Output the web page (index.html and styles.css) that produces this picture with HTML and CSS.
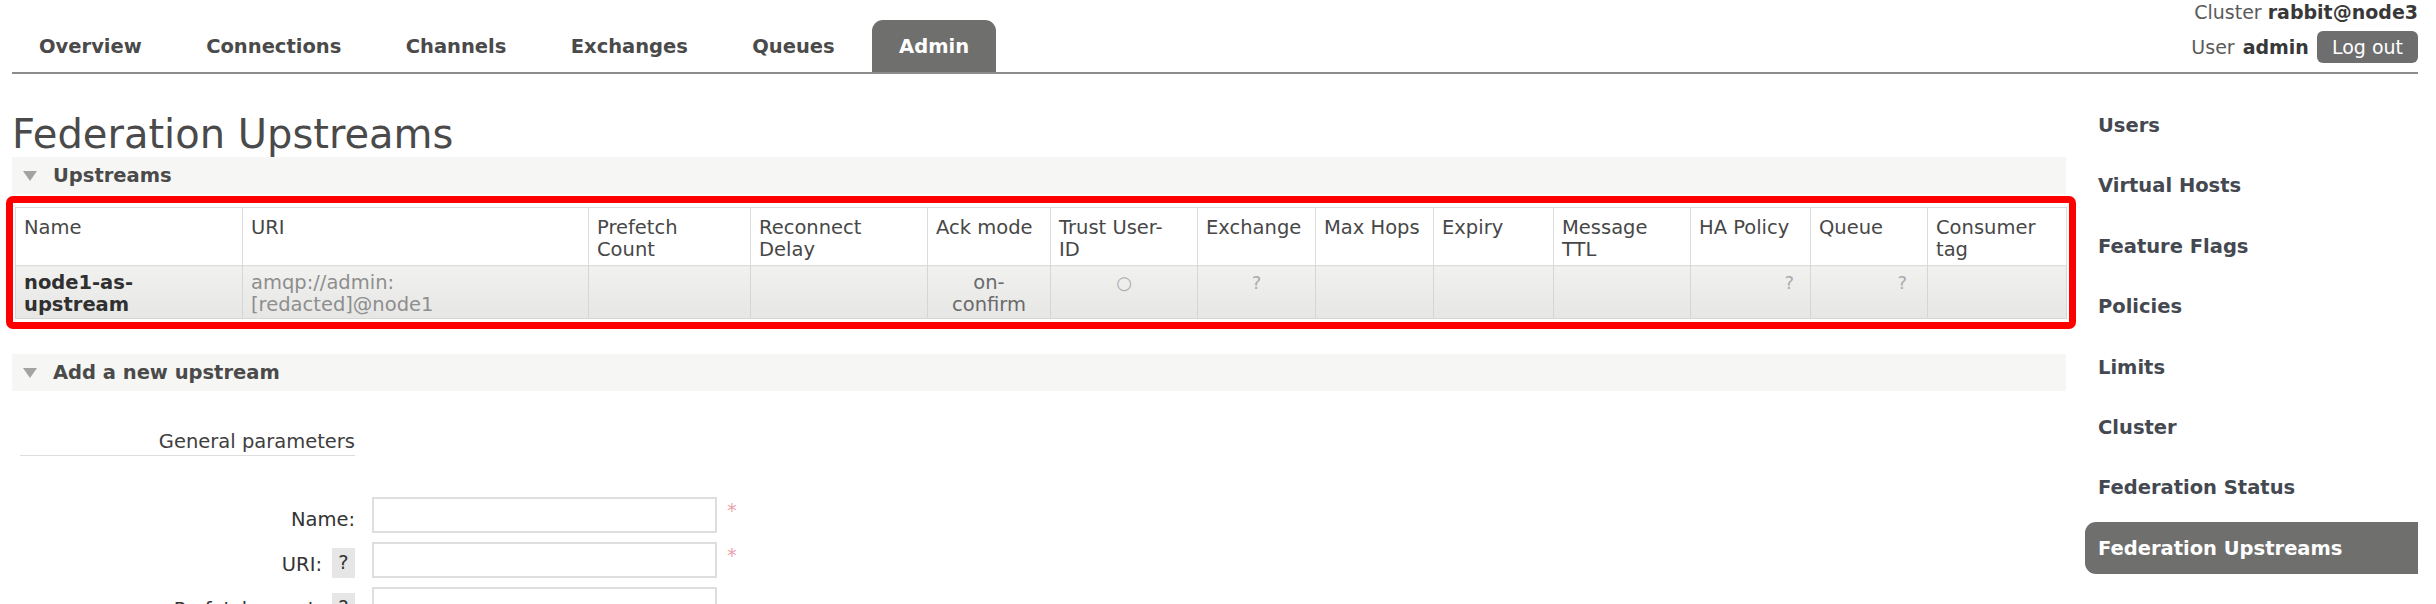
FILE: index.html
```html
<!DOCTYPE html>
<html>
<head>
<meta charset="utf-8">
<title>RabbitMQ Management - Federation Upstreams</title>
<link rel="stylesheet" href="styles.css">
</head>
<body>
<div class="viewport">
  <header class="top">
    <ul class="tabs">
      <li class="tab"><a>Overview</a></li>
      <li class="tab"><a>Connections</a></li>
      <li class="tab"><a>Channels</a></li>
      <li class="tab"><a>Exchanges</a></li>
      <li class="tab"><a>Queues</a></li>
      <li class="tab active"><a>Admin</a></li>
    </ul>
    <div class="login">
      <div class="cluster">Cluster <b>rabbit@node3</b></div>
      <div class="user">User <b>admin</b><span class="logout">Log out</span></div>
    </div>
  </header>

  <div class="page">
    <main class="main">
      <h1 class="title">Federation Upstreams</h1>

      <section class="section">
        <h2 class="section-head"><span class="tri"></span>Upstreams</h2>
        <div class="hl-wrap">
          <table class="list">
            <colgroup>
              <col class="c-name"><col class="c-uri"><col class="c-prefetch"><col class="c-reconnect"><col class="c-ack"><col class="c-trust"><col class="c-exchange"><col class="c-hops"><col class="c-expiry"><col class="c-ttl"><col class="c-ha"><col class="c-queue"><col class="c-tag">
            </colgroup>
            <thead>
              <tr>
                <th>Name</th>
                <th>URI</th>
                <th>Prefetch<br>Count</th>
                <th>Reconnect<br>Delay</th>
                <th>Ack mode</th>
                <th>Trust User-<br>ID</th>
                <th>Exchange</th>
                <th>Max Hops</th>
                <th>Expiry</th>
                <th>Message<br>TTL</th>
                <th>HA Policy</th>
                <th>Queue</th>
                <th>Consumer<br>tag</th>
              </tr>
            </thead>
            <tbody>
              <tr>
                <td class="strong">node1-as-<br>upstream</td>
                <td class="muted">amqp://admin:<br>[redacted]@node1</td>
                <td></td>
                <td></td>
                <td class="centre">on-<br>confirm</td>
                <td class="centre faint">○</td>
                <td class="centre faint">?</td>
                <td></td>
                <td></td>
                <td></td>
                <td class="right faint">?</td>
                <td class="right faint pad-q">?</td>
                <td></td>
              </tr>
            </tbody>
          </table>
          <div class="hl"></div>
        </div>
      </section>

      <section class="section second">
        <h2 class="section-head"><span class="tri"></span>Add a new upstream</h2>
        <div class="form">
          <div class="form-group">General parameters</div>
          <div class="form-row">
            <label class="form-label">Name:</label>
            <span class="input"></span>
            <span class="req">*</span>
          </div>
          <div class="form-row">
            <label class="form-label">URI:<span class="help">?</span></label>
            <span class="input"></span>
            <span class="req">*</span>
          </div>
          <div class="form-row">
            <label class="form-label">Prefetch count:<span class="help">?</span></label>
            <span class="input"></span>
            <span class="req"></span>
          </div>
        </div>
      </section>
    </main>

    <nav class="sidebar">
      <ul class="side-list">
        <li class="side-item"><a>Users</a></li>
        <li class="side-item"><a>Virtual Hosts</a></li>
        <li class="side-item"><a>Feature Flags</a></li>
        <li class="side-item"><a>Policies</a></li>
        <li class="side-item"><a>Limits</a></li>
        <li class="side-item"><a>Cluster</a></li>
        <li class="side-item"><a>Federation Status</a></li>
        <li class="side-item active"><a>Federation Upstreams</a></li>
      </ul>
    </nav>
  </div>
</div>
</body>
</html>
```

FILE: styles.css
```css
* { box-sizing: border-box; }

html, body {
  margin: 0;
  padding: 0;
  background: #ffffff;
}

body {
  font-family: "DejaVu Sans", Verdana, sans-serif;
  font-size: 19.5px;
  color: #484848;
}

.viewport {
  height: 604px;
  overflow: hidden;
}

/* ---------- top bar ---------- */
.top {
  display: flex;
  justify-content: space-between;
  align-items: flex-end;
  height: 74px;
  margin: 0 18px 0 12px;
  border-bottom: 2px solid #8c8c8c;
}

.tabs {
  display: flex;
  gap: 10.4px;
  list-style: none;
  margin: 0;
  padding: 0;
}

.tab a {
  display: block;
  height: 52px;
  line-height: 53px;
  padding: 0 27px;
  font-weight: bold;
  color: #4a4a4a;
  border-radius: 11px 11px 0 0;
}

.tab.active a {
  background: #6f706e;
  color: #ffffff;
}

.login {
  display: flex;
  flex-direction: column;
  align-items: flex-end;
  gap: 8px;
  padding-bottom: 9px;
  font-size: 19px;
  color: #5a5a5a;
}

.cluster, .user {
  line-height: 22px;
}

.cluster {
  margin-top: -1px;
}

.login b {
  color: #383838;
}

.user {
  display: flex;
  align-items: center;
  gap: 8px;
}

.logout {
  display: inline-block;
  height: 32px;
  line-height: 32px;
  padding: 0 15px;
  background: #6e6e6e;
  color: #ffffff;
  border-radius: 6px;
}

/* ---------- page ---------- */
.page {
  display: flex;
  gap: 19px;
  padding: 0 18px 0 12px;
}

.main {
  flex: 1;
  min-width: 0;
}

.title {
  margin: 38px 0 0 0;
  font-size: 40px;
  line-height: 45px;
  font-weight: normal;
  color: #4a4a4a;
}

.section-head {
  display: flex;
  align-items: center;
  height: 37px;
  margin: 0;
  padding-left: 11px;
  background: #f6f6f4;
  font-size: 19.5px;
  font-weight: bold;
  color: #4a4a4a;
}

.tri {
  width: 0;
  height: 0;
  margin-right: 16px;
  border-left: 7px solid transparent;
  border-right: 7px solid transparent;
  border-top: 10px solid #a3a3a3;
}

.second {
  margin-top: 35px;
}

/* ---------- list table ---------- */
.hl-wrap {
  position: relative;
  margin: 13px 0 0 3px;
}

.list {
  width: 2051px;
  table-layout: fixed;
  border-collapse: collapse;
  border: 1px solid #dcdcdc;
  font-size: 19.5px;
}

.c-name { width: 227px; }
.c-uri { width: 346px; }
.c-prefetch { width: 162px; }
.c-reconnect { width: 177px; }
.c-ack { width: 123px; }
.c-trust { width: 147px; }
.c-exchange { width: 118px; }
.c-hops { width: 118px; }
.c-expiry { width: 120px; }
.c-ttl { width: 137px; }
.c-ha { width: 120px; }
.c-queue { width: 117px; }
.c-tag { width: 139px; }

.list th {
  height: 58px;
  padding: 9px 8px 3px 8px;
  text-align: left;
  vertical-align: top;
  font-weight: normal;
  line-height: 22px;
  white-space: nowrap;
  color: #474747;
  background: #ffffff;
  border: 1px solid #dcdcdc;
}

.list td {
  height: 53px;
  padding: 6px 8px 2px 8px;
  vertical-align: top;
  line-height: 22px;
  white-space: nowrap;
  color: #6a6a6a;
  background: linear-gradient(#f1f1f0, #e6e6e5);
  border: 1px solid #d6d6d6;
}

.list td.strong {
  font-weight: bold;
  color: #303030;
}

.list td.muted {
  color: #8e8e8e;
}

.list td.centre { text-align: center; }
.list td.right { text-align: right; padding-right: 16px; }
.list td.pad-q { padding-right: 20px; }
.list td.faint { color: #ababab; font-size: 18px; }

.hl {
  position: absolute;
  top: -11px;
  left: -9px;
  right: -10px;
  bottom: -10px;
  border: 7px solid #ff0000;
  border-radius: 7px;
  pointer-events: none;
}

/* ---------- form ---------- */
.form {
  margin-left: 8px;
}

.form-group {
  width: 335px;
  margin-top: 40px;
  padding-bottom: 2px;
  text-align: right;
  line-height: 22px;
  font-size: 19.5px;
  color: #3e3e3e;
  border-bottom: 1px solid #dddddd;
}

.form-row {
  display: grid;
  grid-template-columns: 335px 345px 20px;
  column-gap: 17px;
  align-items: end;
  margin-top: 9px;
}

.form-group + .form-row {
  margin-top: 41px;
}

.form-label {
  display: flex;
  justify-content: flex-end;
  align-items: flex-end;
  gap: 10px;
  padding-bottom: 2px;
  line-height: 22px;
  color: #333333;
}

.help {
  display: inline-block;
  width: 23px;
  height: 30px;
  margin-bottom: -2px;
  line-height: 30px;
  text-align: center;
  background: #e6e6e6;
  color: #333333;
}

.input {
  display: block;
  height: 36px;
  border: 2px solid #dedede;
  background: #ffffff;
}

.req {
  align-self: start;
  margin-left: -7px;
  padding-top: 3px;
  line-height: 22px;
  color: #eba4ac;
}

/* ---------- sidebar ---------- */
.sidebar {
  width: 333px;
  flex: none;
}

.side-list {
  list-style: none;
  margin: 25px 0 0 0;
  padding: 0;
}

.side-item {
  margin-bottom: 8.4px;
}

.side-item a {
  display: block;
  height: 52px;
  line-height: 53px;
  padding-left: 13px;
  font-size: 19.5px;
  font-weight: bold;
  color: #444850;
  border-radius: 11px 0 0 11px;
}

.side-item.active a {
  background: #6f706e;
  color: #ffffff;
}
```
